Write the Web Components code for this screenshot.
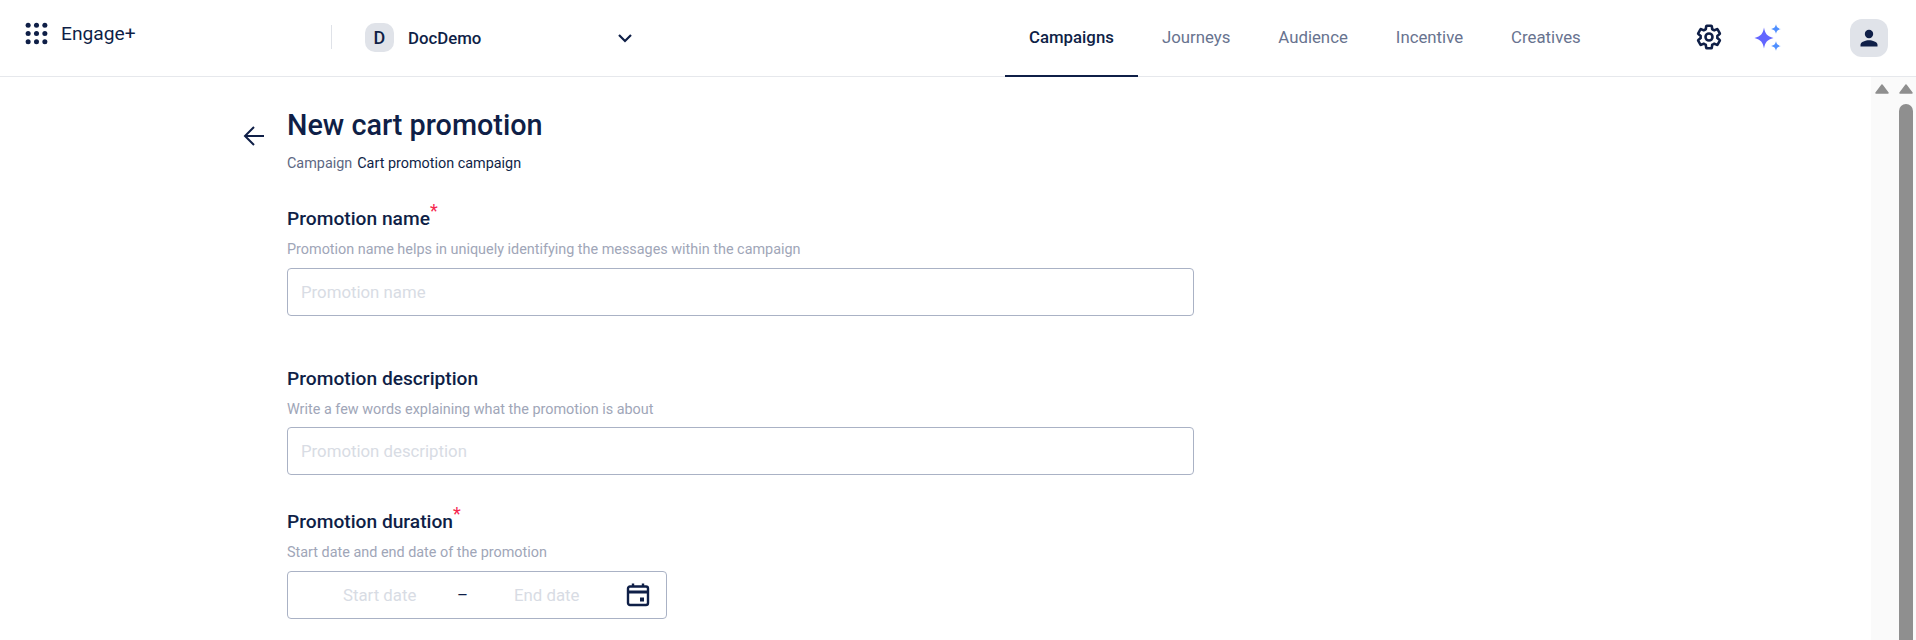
<!DOCTYPE html>
<html>
<head>
<meta charset="utf-8">
<title>New cart promotion</title>
<style>
  html, body { margin: 0; height: 640px; overflow: hidden; background: #fff; }
  body { font-family: Roboto, "Liberation Sans", sans-serif; color: #0f1f47; }
  .page { display: flex; height: 563px; }
  promo-form { flex: 1; }
</style>
</head>
<body>
<app-header></app-header>
<div class="page">
  <promo-form>
    <form-field label="Promotion name" hint="Promotion name helps in uniquely identifying the messages within the campaign" required style="margin-bottom:51px">
      <text-box placeholder="Promotion name"></text-box>
    </form-field>
    <form-field label="Promotion description" hint="Write a few words explaining what the promotion is about" style="margin-bottom:35px">
      <text-box placeholder="Promotion description" style="margin-top:-1px"></text-box>
    </form-field>
    <form-field label="Promotion duration" hint="Start date and end date of the promotion" required>
      <date-range></date-range>
    </form-field>
  </promo-form>
  <fake-scrollbar></fake-scrollbar>
</div>

<script>
class AppHeader extends HTMLElement {
  constructor() {
    super();
    this.shadowDOM = this.attachShadow({ mode: 'open' });
    this.render();
  }

  render() {
    const dots = [];
    for (let y = 0; y < 3; y++) {
      for (let x = 0; x < 3; x++) {
        dots.push(`<circle cx="${3 + x * 8}" cy="${3 + y * 8}" r="2.4"/>`);
      }
    }
    this.shadowDOM.innerHTML = `
      <style>
        :host {
          display: flex;
          height: 76px;
          border-bottom: 1px solid #e6e8ec;
          box-sizing: content-box;
          color: #0f1f47;
          font-family: Roboto, "Liberation Sans", sans-serif;
        }
        .brand {
          width: 331px;
          padding: 22px 0 0 25px;
          box-sizing: border-box;
          display: flex;
          align-items: flex-start;
          gap: 13px;
          flex: none;
        }
        .brand span { font-size: 19.200px; line-height: 24px; }
        .divider { width: 1px; height: 24px; margin-top: 25px; background: #dfe2e8; flex: none; }
        .account {
          width: 268px;
          margin-left: 33px;
          padding-top: 23px;
          box-sizing: border-box;
          display: flex;
          align-items: flex-start;
          flex: none;
        }
        .letter {
          width: 29px; height: 29px;
          border-radius: 10px;
          background: #e0e3e9;
          display: flex; align-items: center; justify-content: center;
          font-size: 18px;
          font-weight: 500;
        }
        .name { margin-left: 14px; font-size: 16.800px; font-weight: 500; line-height: 30px; flex: 1; }
        .chev { margin-top: 7px; }
        .tabs { margin-left: 372px; display: flex; height: 77px; flex: none; }
        .icons { display: flex; align-items: flex-start; flex: none; }
        .gear { margin: 23px 0 0 90px; }
        .spark { margin: 24px 0 0 31px; }
        .me {
          margin: 19px 0 0 68px;
          width: 38px; height: 38px;
          border-radius: 12px;
          background: #e0e3e9;
          display: flex; align-items: center; justify-content: center;
        }
      </style>
      <div class="brand">
        <svg width="23" height="23" viewBox="0 0 22 22" fill="#0f1f47">${dots.join('')}</svg>
        <span>Engage+</span>
      </div>
      <div class="divider"></div>
      <div class="account">
        <div class="letter">D</div>
        <div class="name">DocDemo</div>
        <svg class="chev" width="16" height="16" viewBox="0 0 16 16" fill="none" stroke="#0f1f47" stroke-width="2.200"><path d="M2 5l6 6 6-6"/></svg>
      </div>
      <div class="tabs">
        <nav-tab active>Campaigns</nav-tab>
        <nav-tab>Journeys</nav-tab>
        <nav-tab>Audience</nav-tab>
        <nav-tab>Incentive</nav-tab>
        <nav-tab>Creatives</nav-tab>
      </div>
      <div class="icons">
        <svg class="gear" width="28" height="28" viewBox="0 0 24 24" fill="none" stroke="#0f1f47" stroke-width="2.200" stroke-linejoin="round">
          <path d="M19.140 12.940c.04-.3.06-.61.06-.94 0-.32-.02-.64-.07-.94l2.030-1.580c.18-.14.23-.41.12-.61l-1.920-3.320c-.12-.22-.37-.29-.59-.22l-2.390.96c-.5-.38-1.030-.7-1.620-.94l-.36-2.540c-.04-.24-.24-.41-.48-.41h-3.840c-.24 0-.43.17-.47.41l-.36 2.540c-.59.24-1.130.57-1.620.94l-2.390-.96c-.22-.08-.47 0-.59.22L2.740 8.870c-.12.21-.08.47.12.61l2.030 1.580c-.05.3-.09.63-.09.94s.02.64.07.94l-2.030 1.580c-.18.14-.23.41-.12.61l1.920 3.320c.12.22.37.29.59.22l2.390-.96c.5.38 1.030.7 1.620.94l.36 2.540c.05.24.24.41.48.41h3.840c.24 0 .44-.17.47-.41l.36-2.540c.59-.24 1.130-.56 1.620-.94l2.390.96c.22.08.47 0 .59-.22l1.920-3.320c.12-.22.07-.47-.12-.61l-2.010-1.580z"/>
          <circle cx="12" cy="12" r="3"/>
        </svg>
        <svg class="spark" width="28" height="28" viewBox="0 0 28 28">
          <path fill="#6366ff" d="M10 3.500c1 6 3.200 9 9.500 10.500-6.300 1.500-8.500 4.500-9.500 10.500C9 18.500 6.800 15.500 .5 14 6.800 12.500 9 9.500 10 3.500z"/>
          <path fill="#4f8fff" d="M22 .3c.6 2.800 1.700 4 4.800 4.700-3.100.7-4.200 1.900-4.800 4.700-.6-2.800-1.700-4-4.800-4.700 3.100-.7 4.200-1.900 4.800-4.700z"/>
          <path fill="#4f8fff" d="M22 17.300c.6 2.800 1.700 4 4.800 4.700-3.100.7-4.200 1.900-4.800 4.700-.6-2.800-1.700-4-4.800-4.700 3.100-.7 4.200-1.900 4.800-4.700z"/>
        </svg>
        <div class="me">
          <svg width="18" height="18" viewBox="0 0 18 18" fill="#0f1f47"><circle cx="9" cy="5" r="4.200"/><path d="M0.500 17.500v-1.800c0-3 5.300-4.500 8.500-4.500s8.500 1.500 8.500 4.500v1.800z"/></svg>
        </div>
      </div>
    `;
  }
}

class NavTab extends HTMLElement {
  constructor() {
    super();
    this.shadowDOM = this.attachShadow({ mode: 'open' });
    this.shadowDOM.innerHTML = `
      <style>
        :host {
          display: flex;
          align-items: center;
          box-sizing: border-box;
          height: 77px;
          padding: 0 24px 3px;
          font-size: 16.800px;
          color: #68738f;
        }
        :host([active]) {
          color: #0f1f47;
          font-weight: 500;
          border-bottom: 2px solid #0f1f47;
          padding-bottom: 1px;
        }
      </style>
      <slot></slot>
    `;
  }
}

class PromoForm extends HTMLElement {
  constructor() {
    super();
    this.shadowDOM = this.attachShadow({ mode: 'open' });
    this.shadowDOM.innerHTML = `
      <style>
        :host {
          display: grid;
          grid-template-columns: 22px 907px;
          column-gap: 22px;
          align-content: start;
          padding: 28px 0 0 243px;
          font-family: Roboto, "Liberation Sans", sans-serif;
          color: #0f1f47;
        }
        .back { margin-top: 20px; }
        h1 { margin: 0; font-size: 28.800px; line-height: 40px; font-weight: 500; }
        .crumb { margin: 9px 0 33px; font-size: 14.400px; line-height: 20px; }
        .crumb span { color: #5d6883; margin-right: 5px; }
      </style>
      <svg class="back" width="22" height="22" viewBox="0 0 22 22" fill="none" stroke="#0f1f47" stroke-width="2"><path d="M21 11H2M11 2l-9 9 9 9"/></svg>
      <div>
        <h1>New cart promotion</h1>
        <p class="crumb"><span>Campaign</span>Cart promotion campaign</p>
        <slot></slot>
      </div>
    `;
  }
}

class FormField extends HTMLElement {
  constructor() {
    super();
    this.shadowDOM = this.attachShadow({ mode: 'open' });
  }

  connectedCallback() {
    const star = this.hasAttribute('required') ? '<sup>*</sup>' : '';
    this.shadowDOM.innerHTML = `
      <style>
        :host { display: block; }
        .label { font-size: 19.200px; line-height: 24px; font-weight: 500; position: relative; }
        sup { position: absolute; top: -6px; font-size: 18px; line-height: 20px; font-weight: 400; color: #f5274f; }
        .hint { margin: 9px 0 8px; font-size: 14.400px; line-height: 20px; color: #a0a6b8; }
      </style>
      <div class="label">${this.getAttribute('label')}${star}</div>
      <div class="hint">${this.getAttribute('hint')}</div>
      <slot></slot>
    `;
  }
}

class TextBox extends HTMLElement {
  constructor() {
    super();
    this.shadowDOM = this.attachShadow({ mode: 'open' });
  }

  connectedCallback() {
    this.shadowDOM.innerHTML = `
      <style>
        :host {
          display: flex;
          align-items: center;
          box-sizing: border-box;
          height: 48px;
          padding: 0 13px;
          border: 1px solid #aab2c5;
          border-radius: 4px;
          font-size: 16.800px;
          color: #d8dce4;
        }
      </style>
      ${this.getAttribute('placeholder')}
    `;
  }
}

class DateRange extends HTMLElement {
  constructor() {
    super();
    this.shadowDOM = this.attachShadow({ mode: 'open' });
    this.shadowDOM.innerHTML = `
      <style>
        :host {
          display: flex;
          align-items: center;
          box-sizing: border-box;
          width: 380px;
          height: 48px;
          padding-left: 55px;
          border: 1px solid #aab2c5;
          border-radius: 4px;
          font-size: 16.800px;
          color: #d8dce4;
        }
        span { flex: none; }
        .start { width: 114px; }
        .dash { color: #0f1f47; width: 57px; }
        .end { width: 112px; }
      </style>
      <span class="start">Start date</span>
      <span class="dash">–</span>
      <span class="end">End date</span>
      <svg width="24" height="24" viewBox="0 0 24 24" fill="none" stroke="#0f1f47" stroke-width="2.400">
        <rect x="2" y="3.500" width="20" height="18.500" rx="2"/>
        <path d="M2 9h20" stroke-width="3"/>
        <path d="M7 0.500v3M17 0.500v3"/>
        <rect x="14" y="14.500" width="4" height="4" fill="#0f1f47" stroke="none"/>
      </svg>
    `;
  }
}

class FakeScrollbar extends HTMLElement {
  constructor() {
    super();
    this.shadowDOM = this.attachShadow({ mode: 'open' });
    this.shadowDOM.innerHTML = `
      <style>
        :host {
          display: flex;
          gap: 10px;
          width: 45px;
          box-sizing: border-box;
          padding: 7px 3px 0 4px;
          background: #fafafa;
          flex: none;
        }
        .col { width: 14px; display: flex; flex-direction: column; align-items: center; gap: 10px; }
        .up { width: 14px; height: 10px; }
        .up svg { display: block; }
        .thumb { flex: 1; width: 14px; background: #8f8f8f; border-radius: 7px 7px 0 0; }
      </style>
      <div class="col"><div class="up"><svg width="14" height="10" viewBox="0 0 14 10"><path fill="#8f8f8f" stroke="#8f8f8f" stroke-width="1.500" stroke-linejoin="round" d="M7 1l6 8H1z"/></svg></div></div>
      <div class="col"><div class="up"><svg width="14" height="10" viewBox="0 0 14 10"><path fill="#8f8f8f" stroke="#8f8f8f" stroke-width="1.500" stroke-linejoin="round" d="M7 1l6 8H1z"/></svg></div><div class="thumb"></div></div>
    `;
  }
}

customElements.define('nav-tab', NavTab);
customElements.define('app-header', AppHeader);
customElements.define('promo-form', PromoForm);
customElements.define('form-field', FormField);
customElements.define('text-box', TextBox);
customElements.define('date-range', DateRange);
customElements.define('fake-scrollbar', FakeScrollbar);
</script>
</body>
</html>
